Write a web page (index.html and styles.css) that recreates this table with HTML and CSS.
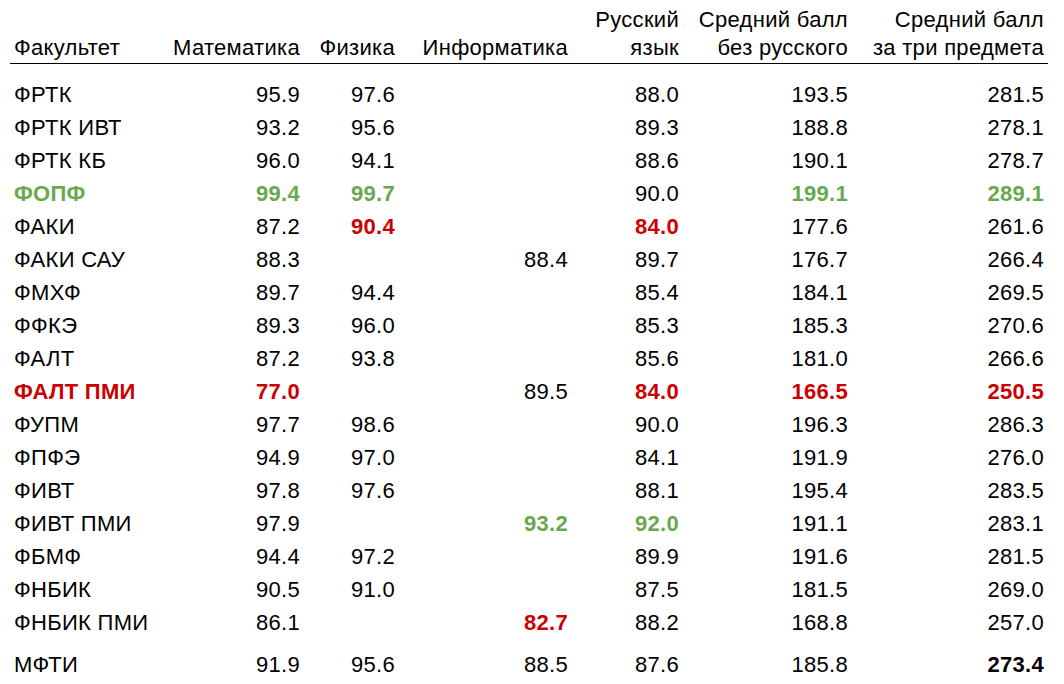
FILE: index.html
```html
<!DOCTYPE html>
<html lang="ru">
<head>
<meta charset="utf-8">
<link rel="stylesheet" href="styles.css">
</head>
<body>
<table class="scores">
  <colgroup>
    <col class="c1"><col class="c2"><col class="c3"><col class="c4"><col class="c5"><col class="c6"><col class="c7">
  </colgroup>
  <thead>
    <tr>
      <th class="name">Факультет</th>
      <th>Математика</th>
      <th>Физика</th>
      <th class="inf">Информатика</th>
      <th>Русский<br>язык</th>
      <th>Средний балл<br>без русского</th>
      <th class="last">Средний балл<br>за три предмета</th>
    </tr>
  </thead>
  <tbody>
    <tr class="first"><td class="name">ФРТК</td><td>95.9</td><td>97.6</td><td></td><td>88.0</td><td>193.5</td><td class="last">281.5</td></tr>
    <tr><td class="name">ФРТК ИВТ</td><td>93.2</td><td>95.6</td><td></td><td>89.3</td><td>188.8</td><td class="last">278.1</td></tr>
    <tr><td class="name">ФРТК КБ</td><td>96.0</td><td>94.1</td><td></td><td>88.6</td><td>190.1</td><td class="last">278.7</td></tr>
    <tr><td class="name good">ФОПФ</td><td class="good">99.4</td><td class="good">99.7</td><td></td><td>90.0</td><td class="good">199.1</td><td class="last good">289.1</td></tr>
    <tr><td class="name">ФАКИ</td><td>87.2</td><td class="bad">90.4</td><td></td><td class="bad">84.0</td><td>177.6</td><td class="last">261.6</td></tr>
    <tr><td class="name">ФАКИ САУ</td><td>88.3</td><td></td><td>88.4</td><td>89.7</td><td>176.7</td><td class="last">266.4</td></tr>
    <tr><td class="name">ФМХФ</td><td>89.7</td><td>94.4</td><td></td><td>85.4</td><td>184.1</td><td class="last">269.5</td></tr>
    <tr><td class="name">ФФКЭ</td><td>89.3</td><td>96.0</td><td></td><td>85.3</td><td>185.3</td><td class="last">270.6</td></tr>
    <tr><td class="name">ФАЛТ</td><td>87.2</td><td>93.8</td><td></td><td>85.6</td><td>181.0</td><td class="last">266.6</td></tr>
    <tr><td class="name bad">ФАЛТ ПМИ</td><td class="bad">77.0</td><td></td><td>89.5</td><td class="bad">84.0</td><td class="bad">166.5</td><td class="last bad">250.5</td></tr>
    <tr><td class="name">ФУПМ</td><td>97.7</td><td>98.6</td><td></td><td>90.0</td><td>196.3</td><td class="last">286.3</td></tr>
    <tr><td class="name">ФПФЭ</td><td>94.9</td><td>97.0</td><td></td><td>84.1</td><td>191.9</td><td class="last">276.0</td></tr>
    <tr><td class="name">ФИВТ</td><td>97.8</td><td>97.6</td><td></td><td>88.1</td><td>195.4</td><td class="last">283.5</td></tr>
    <tr><td class="name">ФИВТ ПМИ</td><td>97.9</td><td></td><td class="good">93.2</td><td class="good">92.0</td><td>191.1</td><td class="last">283.1</td></tr>
    <tr><td class="name">ФБМФ</td><td>94.4</td><td>97.2</td><td></td><td>89.9</td><td>191.6</td><td class="last">281.5</td></tr>
    <tr><td class="name">ФНБИК</td><td>90.5</td><td>91.0</td><td></td><td>87.5</td><td>181.5</td><td class="last">269.0</td></tr>
    <tr><td class="name">ФНБИК ПМИ</td><td>86.1</td><td></td><td class="bad">82.7</td><td>88.2</td><td>168.8</td><td class="last">257.0</td></tr>
    <tr class="total"><td class="name">МФТИ</td><td>91.9</td><td>95.6</td><td>88.5</td><td>87.6</td><td>185.8</td><td class="last strong">273.4</td></tr>
  </tbody>
</table>
</body>
</html>
```

FILE: styles.css
```css
html, body {
  margin: 0;
  padding: 0;
  background: #ffffff;
}

body {
  font-family: "Liberation Sans", Arial, sans-serif;
  font-size: 22px;
  letter-spacing: 0.3px;
  color: #000000;
}

.scores {
  margin-left: 10px;
  border-collapse: collapse;
  table-layout: fixed;
  width: 1038px;
}

.c1 { width: 160px; }
.c2 { width: 130px; }
.c3 { width: 95px; }
.c4 { width: 173px; }
.c5 { width: 111px; }
.c6 { width: 169px; }
.c7 { width: 200px; }

.scores th {
  font-weight: normal;
  text-align: right;
  vertical-align: bottom;
  line-height: 28px;
  padding: 6px 0 1px 0;
  border-bottom: 1px solid #000000;
  white-space: nowrap;
}

.scores td {
  text-align: right;
  line-height: 33px;
  padding: 0;
  white-space: nowrap;
}

.scores .name {
  text-align: left;
  padding-left: 4px;
}

.scores .last {
  padding-right: 4px;
}

.scores .first td {
  padding-top: 14px;
}

.scores .total td {
  padding-top: 9px;
}

.good {
  color: #6aa84f;
  font-weight: bold;
}

.bad {
  color: #cc0000;
  font-weight: bold;
}

.strong {
  font-weight: bold;
}
```
